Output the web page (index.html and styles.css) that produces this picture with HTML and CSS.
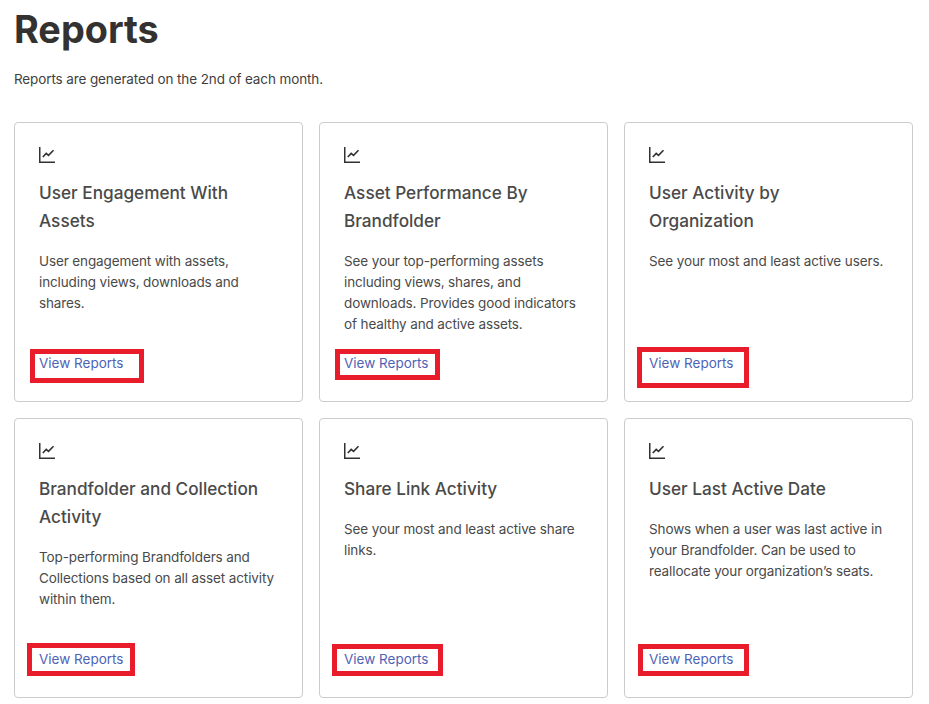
FILE: index.html
```html
<!DOCTYPE html>
<html lang="en">
<head>
<meta charset="utf-8">
<title>Reports</title>
<link rel="stylesheet" href="styles.css">
</head>
<body>
<svg class="sprite" width="0" height="0" aria-hidden="true">
  <symbol id="chart" viewBox="0 0 16 16">
    <path d="M0.75 0V15.25H16" fill="none" stroke="currentColor" stroke-width="1.5"/>
    <path d="M3.8 10L7.2 6.4L9.5 8.4L14.5 3.2" fill="none" stroke="currentColor" stroke-width="1.6"/>
  </symbol>
</svg>
<main class="page">
  <h1 class="title">Reports</h1>
  <p class="intro">Reports are generated on the 2nd of each month.</p>
  <section class="grid">
    <article class="card">
      <svg class="icon"><use href="#chart"/></svg>
      <h2 class="card-title">User Engagement With Assets</h2>
      <p class="card-text">User engagement with assets, including views, downloads and shares.</p>
      <a class="card-link" href="#">View Reports<span class="mark mark-1"></span></a>
    </article>
    <article class="card">
      <svg class="icon"><use href="#chart"/></svg>
      <h2 class="card-title">Asset Performance By Brandfolder</h2>
      <p class="card-text">See your top-performing assets including views, shares, and downloads. Provides good indicators of healthy and active assets.</p>
      <a class="card-link" href="#">View Reports<span class="mark mark-2"></span></a>
    </article>
    <article class="card">
      <svg class="icon"><use href="#chart"/></svg>
      <h2 class="card-title">User Activity by Organization</h2>
      <p class="card-text">See your most and least active users.</p>
      <a class="card-link" href="#">View Reports<span class="mark mark-3"></span></a>
    </article>
    <article class="card">
      <svg class="icon"><use href="#chart"/></svg>
      <h2 class="card-title">Brandfolder and Collection Activity</h2>
      <p class="card-text">Top-performing Brandfolders and Collections based on all asset activity within them.</p>
      <a class="card-link" href="#">View Reports<span class="mark mark-4"></span></a>
    </article>
    <article class="card">
      <svg class="icon"><use href="#chart"/></svg>
      <h2 class="card-title">Share Link Activity</h2>
      <p class="card-text">See your most and least active share links.</p>
      <a class="card-link" href="#">View Reports<span class="mark mark-5"></span></a>
    </article>
    <article class="card">
      <svg class="icon"><use href="#chart"/></svg>
      <h2 class="card-title">User Last Active Date</h2>
      <p class="card-text">Shows when a user was last active in your Brandfolder. Can be used to reallocate your organization’s seats.</p>
      <a class="card-link" href="#">View Reports<span class="mark mark-6"></span></a>
    </article>
  </section>
</main>
</body>
</html>
```

FILE: styles.css
```css
* {
  box-sizing: border-box;
}

html,
body {
  margin: 0;
  background: #fff;
}

body {
  font-family: "Inter", "Liberation Sans", sans-serif;
  color: #4a4a4a;
  overflow: hidden;
}

.sprite {
  position: absolute;
}

.page {
  padding: 6px 14px 0;
}

.title {
  margin: 0;
  font-size: 37.8px;
  line-height: 46px;
  font-weight: 700;
  color: #333231;
}

.intro {
  margin: 15px 0 0;
  font-size: 13.5px;
  line-height: 24px;
  letter-spacing: -0.12px;
  color: #3f3f3f;
}

.grid {
  display: grid;
  grid-template-columns: repeat(3, 289px);
  grid-auto-rows: 280px;
  gap: 16px;
  margin-top: 31px;
}

.card {
  display: flex;
  flex-direction: column;
  align-items: flex-start;
  padding: 24px 24px 27px;
  border: 1px solid #cccccc;
  border-radius: 4px;
  background: #fff;
}

.icon {
  display: block;
  width: 16px;
  height: 16px;
  color: #333231;
}

.card-title {
  margin: 16px 0 0;
  font-size: 17.2px;
  line-height: 28px;
  font-weight: 500;
  color: #4a4a4a;
}

.card-text {
  margin: 16px 0 0;
  font-size: 13.5px;
  line-height: 21px;
  letter-spacing: -0.12px;
  color: #4a4a4a;
}

.card-link {
  position: relative;
  display: block;
  margin-top: auto;
  font-size: 13.5px;
  line-height: 21px;
  color: #4f63b5;
  text-decoration: none;
}

.mark {
  position: absolute;
  border: 5px solid #e81c2a;
}

.mark-1 { left: -9px; top: -4px; width: 114px; height: 34px; }
.mark-2 { left: -9px; top: -4px; width: 105px; height: 31px; }
.mark-3 { left: -12px; top: -6px; width: 112px; height: 41px; }
.mark-4 { left: -12px; top: -6px; width: 108px; height: 33px; }
.mark-5 { left: -12px; top: -5px; width: 111px; height: 32px; }
.mark-6 { left: -11px; top: -5px; width: 111px; height: 32px; }
```
